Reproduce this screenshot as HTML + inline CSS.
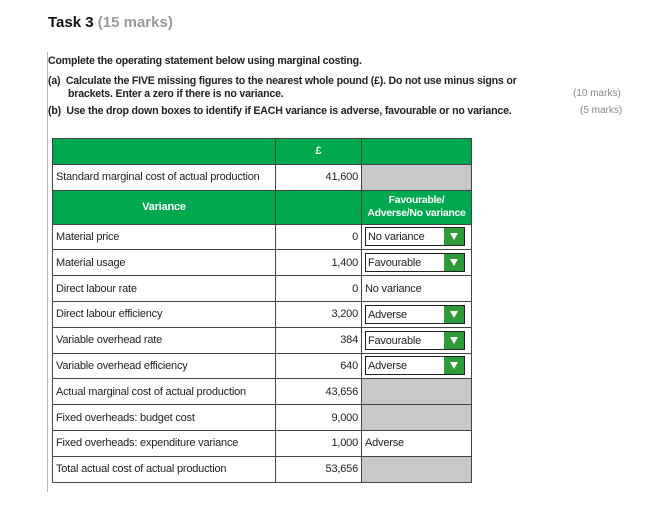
<!DOCTYPE html>
<html><head><style>
body{margin:0;width:662px;height:522px;background:#fff;font-family:"Liberation Sans",Arial,sans-serif;color:#222;position:relative;overflow:hidden}
.a{position:absolute;white-space:nowrap}
.b{font-weight:bold;font-size:10.6px;letter-spacing:-0.2px}
table{position:absolute;left:52px;top:138px;border-collapse:collapse;font-size:11px;letter-spacing:-0.2px}
td{border:1px solid #444;padding:0 3px;height:25.8px;box-sizing:border-box}
td.v{text-align:right}
.g{background:#00a94f;color:#fff;font-weight:bold;text-align:center}
.gr{background:#c8c8c8}
.dd{position:relative;width:100px;height:19px;border:1px solid #222;box-sizing:border-box;line-height:18px;padding-left:2px}
.dd i{position:absolute;right:0;top:0;width:20px;height:17px;background:#2e9b3a}
.dd i:after{content:"";position:absolute;left:6px;top:5px;border-left:4px solid transparent;border-right:4px solid transparent;border-top:7px solid #fff}
</style></head><body>
<div class="a" style="left:47px;top:52px;width:1px;height:440px;background:#bbb"></div>
<div class="a" style="left:48px;top:14px;font-size:15px;font-weight:bold;color:#111">Task 3 <span style="color:#999">(15 marks)</span></div>
<div class="a b" style="left:48px;top:55px">Complete the operating statement below using marginal costing.</div>
<div class="a b" style="left:48px;top:75px">(a)&nbsp;&nbsp;Calculate the FIVE missing figures to the nearest whole pound (£). Do not use minus signs or</div>
<div class="a b" style="left:68px;top:88px">brackets. Enter a zero if there is no variance.</div>
<div class="a b" style="left:48px;top:105px">(b)&nbsp;&nbsp;Use the drop down boxes to identify if EACH variance is adverse, favourable or no variance.</div>
<div class="a" style="left:573px;top:88px;font-size:10px;color:#888">(10 marks)</div>
<div class="a" style="left:580px;top:105px;font-size:10px;color:#888">(5 marks)</div>
<table>
<tr><td class="g" style="width:223px;height:24px"></td><td class="g" style="width:86px">£</td><td class="g" style="width:110px"></td></tr>
<tr><td style="height:24px">Standard marginal cost of actual production</td><td class="v">41,600</td><td class="gr"></td></tr>
<tr><td class="g" style="height:34px">Variance</td><td class="g"></td><td class="g" style="line-height:13px;font-size:10.5px;white-space:nowrap;padding:0 1px;letter-spacing:-0.3px">Favourable/<br>Adverse/No variance</td></tr>
<tr><td>Material price</td><td class="v">0</td><td><div class="dd">No variance<i></i></div></td></tr>
<tr><td>Material usage</td><td class="v">1,400</td><td><div class="dd">Favourable<i></i></div></td></tr>
<tr><td>Direct labour rate</td><td class="v">0</td><td>No variance</td></tr>
<tr><td>Direct labour efficiency</td><td class="v">3,200</td><td><div class="dd">Adverse<i></i></div></td></tr>
<tr><td>Variable overhead rate</td><td class="v">384</td><td><div class="dd">Favourable<i></i></div></td></tr>
<tr><td>Variable overhead efficiency</td><td class="v">640</td><td><div class="dd">Adverse<i></i></div></td></tr>
<tr><td>Actual marginal cost of actual production</td><td class="v">43,656</td><td class="gr"></td></tr>
<tr><td>Fixed overheads: budget cost</td><td class="v">9,000</td><td class="gr"></td></tr>
<tr><td>Fixed overheads: expenditure variance</td><td class="v">1,000</td><td>Adverse</td></tr>
<tr><td>Total actual cost of actual production</td><td class="v">53,656</td><td class="gr"></td></tr>
</table>
</body></html>
